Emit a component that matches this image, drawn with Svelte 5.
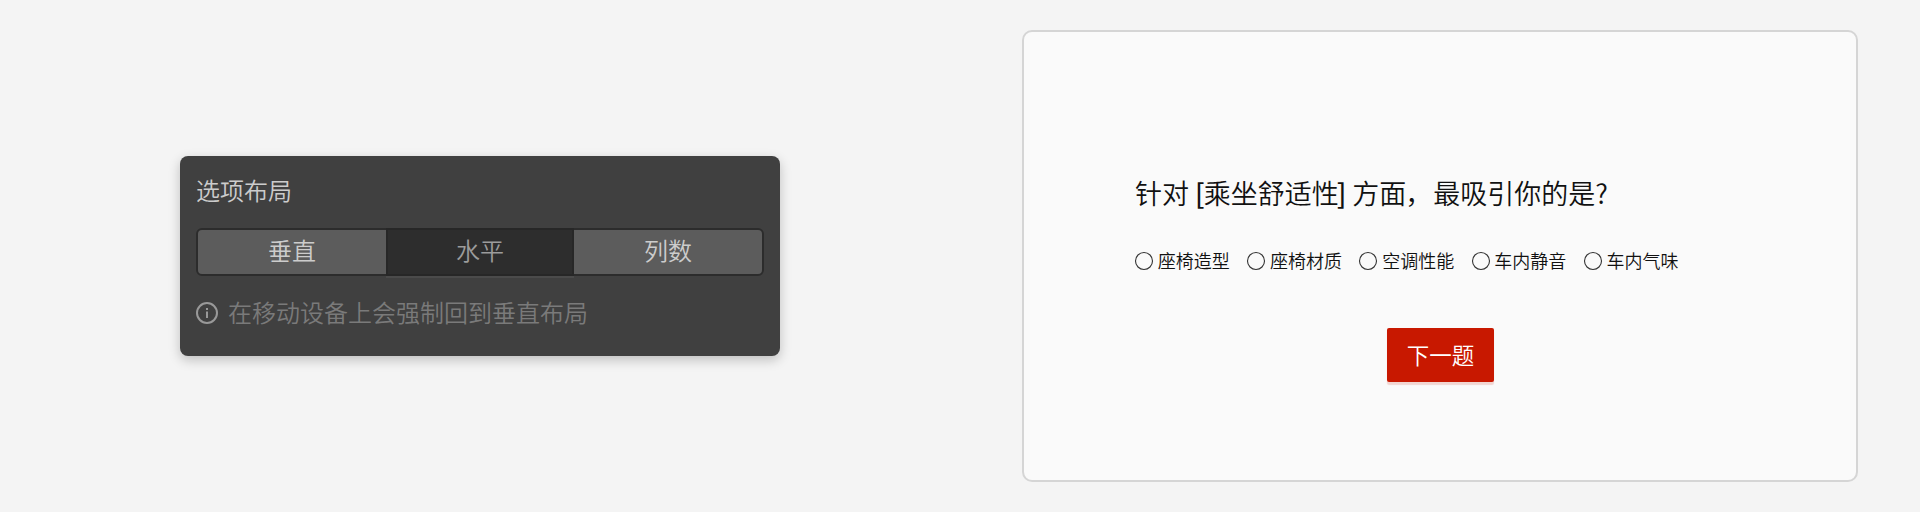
<script>
  const layouts = ['垂直', '水平', '列数'];
  const options = ['座椅造型', '座椅材质', '空调性能', '车内静音', '车内气味'];
  let selected = $state(1);
</script>

<main>
  <section class="settings">
    <div class="panel">
      <h2>选项布局</h2>
      <div class="segments">
        {#each layouts as label, i}
          <button class="segment" class:active={selected === i} onclick={() => (selected = i)}>{label}</button>
        {/each}
      </div>
      <p class="hint">
        <svg width="22" height="22" viewBox="0 0 22 22" fill="none">
          <circle cx="11" cy="11" r="10" stroke="currentColor" stroke-width="2" />
          <path d="M10 6h2v2h-2zM10 9.5h2V16h-2z" fill="currentColor" />
        </svg>
        <span>在移动设备上会强制回到垂直布局</span>
      </p>
    </div>
  </section>
  <section class="preview">
    <h1>针对 <b class="open">[</b>乘坐舒适性<b class="close">]</b> 方面<span class="comma">，</span>最吸引你的是?</h1>
    <div class="options">
      {#each options as option}
        <label>
          <svg width="18" height="18" viewBox="0 0 18 18" fill="none">
            <circle cx="9" cy="9" r="8.5" stroke="#333" stroke-width="1.1" />
          </svg>
          <span>{option}</span>
        </label>
      {/each}
    </div>
    <button class="next">下一题</button>
  </section>
</main>

<style>
  :global(body) {
    margin: 0;
    background: #f4f4f4;
  }
  main {
    display: flex;
    box-sizing: border-box;
    width: 1920px;
    height: 512px;
    padding: 30px 62px 30px 180px;
    justify-content: space-between;
    background: #f4f4f4;
    font-family: 'Noto Sans CJK SC', sans-serif;
    font-weight: 350;
  }
  h1, h2, p {
    margin: 0;
    font-weight: inherit;
  }
  button {
    font: inherit;
    border: 0;
    padding: 0;
  }
  svg {
    display: block;
    flex: none;
    overflow: visible;
  }
  .settings {
    display: flex;
    align-items: center;
  }
  .panel {
    box-sizing: border-box;
    width: 600px;
    height: 200px;
    padding: 16px;
    border-radius: 8px;
    background: #404040;
    box-shadow: 0 4px 12px rgba(0, 0, 0, 0.22);
    font-size: 24px;
  }
  h2 {
    font-size: 24px;
    line-height: 36px;
    color: #cccccc;
  }
  .segments {
    display: grid;
    grid-template-columns: 188px 188px 188px;
    box-sizing: border-box;
    height: 48px;
    margin-top: 20px;
    border: 2px solid #2c2c2c;
    border-radius: 6px;
    background: #5c5c5c;
  }
  .segment {
    padding-bottom: 4px;
    background: transparent;
    color: #cccccc;
    line-height: 40px;
  }
  .segment.active {
    margin: -2px 0;
    border: 2px solid #272727;
    background: #2d2d2d;
    color: #9c9c9c;
    box-shadow: 0 2px 0 #4b4b4b;
  }
  .hint {
    display: flex;
    align-items: center;
    gap: 10px;
    height: 36px;
    margin-top: 19px;
    color: #7a7a7a;
  }
  .hint span {
    padding-bottom: 4px;
  }
  .hint svg {
    color: #999;
  }
  .preview {
    box-sizing: border-box;
    width: 836px;
    height: 452px;
    padding: 141px 111px 0;
    border: 2px solid #d5d5d5;
    border-radius: 10px;
    background: #fafafa;
    color: #111;
  }
  h1 {
    font-size: 27px;
    line-height: 40px;
    white-space: nowrap;
  }
  h1 b {
    font-weight: 500;
  }
  .open {
    margin-right: -1px;
  }
  .close {
    margin-left: -2px;
  }
  .comma {
    margin: 0 1px 0 -1px;
  }
  .options {
    display: flex;
    gap: 17.4px;
    margin-top: 35px;
  }
  label {
    display: flex;
    align-items: center;
    gap: 4.8px;
    height: 26px;
    font-size: 18px;
    line-height: 26px;
    white-space: nowrap;
  }
  label span {
    padding-bottom: 2px;
  }
  .next {
    display: block;
    width: 107px;
    height: 54px;
    margin: 54px 0 0 252px;
    padding-bottom: 2px;
    border-radius: 2px;
    background: #c81800;
    box-shadow: 0 3px 1px rgba(200, 24, 0, 0.16);
    color: #fff;
    font-size: 22.5px;
  }
</style>
